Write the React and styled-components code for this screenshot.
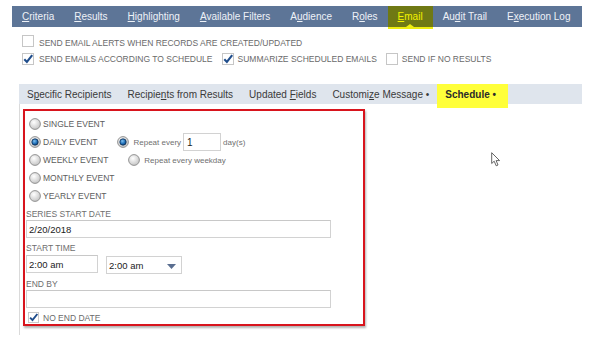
import React, { useId } from 'react';
import styled, { createGlobalStyle, css } from 'styled-components';

const GlobalStyle = createGlobalStyle`
  html, body { margin: 0; padding: 0; background: #fff; }
  body { font-family: "Liberation Sans", Arial, sans-serif; }
  * { box-sizing: border-box; }
`;

const Page = styled.div`
  position: relative;
  width: 597px;
  height: 339px;
  padding: 6px 0 0 12px;
  overflow: hidden;
`;

const NavBar = styled.nav`
  display: flex;
  width: 570px;
  height: 21px;
  background: #5d7597;
`;

const NavItem = styled.div`
  position: relative;
  display: flex;
  align-items: center;
  align-self: flex-start;
  height: 21px;
  padding: 0 10px;
  font-size: 10px;
  color: #eef2f7;
  white-space: nowrap;
  ${(p) =>
    p.$active &&
    css`
      height: 23px;
      padding-bottom: 2px;
      color: #f2f200;
      background: #6f7914;
      &::after {
        content: '';
        position: absolute;
        left: 0;
        right: 0;
        bottom: 0;
        height: 2px;
        background: #eeee10;
      }
      &::before {
        content: '';
        position: absolute;
        left: 50%;
        bottom: 2px;
        margin-left: -4px;
        border-left: 4px solid transparent;
        border-right: 4px solid transparent;
        border-bottom: 3px solid #eeee10;
      }
    `}
`;

const Key = styled.span`
  text-decoration: underline;
  text-underline-offset: 1px;
`;

const Options = styled.div`
  display: flex;
  flex-direction: column;
  padding: 8px 0 0 10px;
`;

const OptionRow = styled.div`
  display: flex;
  align-items: center;
  height: 16px;
`;

const CheckLabel = styled.label`
  display: flex;
  align-items: center;
  gap: ${(p) => (p.$gap ? p.$gap : 5)}px;
  margin-right: 9px;
  font-size: 8.5px;
  color: #6a6a6a;
  white-space: nowrap;
`;

const BoxSvg = styled.svg`
  flex: none;
  display: block;
  margin-top: ${(p) => p.$lift || 0}px;
`;

const SubTabBar = styled.div`
  display: flex;
  margin: 17px 0 0 7px;
  width: 563px;
  height: 20px;
  background: #dfe5ed;
`;

const SubTab = styled.div`
  display: flex;
  align-items: center;
  align-self: flex-start;
  height: 20px;
  padding: 0 8px;
  font-size: 10px;
  color: #3a3a3a;
  white-space: nowrap;
  ${(p) =>
    p.$active &&
    css`
      height: 24px;
      padding: 0 12px 4px 8px;
      background: #ffff3a;
      font-weight: bold;
      color: #2a2a2a;
    `}
`;

const ContentArea = styled.div`
  margin-left: 7px;
  width: 360px;
  padding: 5px 0 9px 3px;
  border-left: 1px solid #dadada;
`;

const RedBox = styled.div`
  width: 342px;
  height: 217px;
  border: 2px solid #d8141d;
  box-shadow: 1px 2px 2px rgba(0, 0, 0, 0.3);
  padding: 4px 0 0 1px;
  display: flex;
  flex-direction: column;
`;

const RadioGroup = styled.div`
  display: flex;
  flex-direction: column;
  margin-left: 3px;
`;

const RadioRow = styled.div`
  display: flex;
  align-items: center;
  gap: 20px;
  height: 18px;
`;

const RadioLabel = styled.label`
  display: flex;
  align-items: center;
  gap: ${(p) => (p.$small ? 4 : 2)}px;
  font-size: ${(p) => (p.$small ? 8 : 8.5)}px;
  color: ${(p) => (p.$small ? '#707070' : '#5c5c5c')};
  white-space: nowrap;
`;

const InlineInput = styled.div`
  width: 38px;
  height: 18px;
  margin: 0 -2px 0 -2px;
  border: 1px solid #d2d2d2;
  display: flex;
  align-items: center;
  padding-left: 3px;
  font-size: 10px;
  color: #222;
`;

const Unit = styled.span`
  font-size: 8px;
  color: #707070;
`;

const FieldLabel = styled.div`
  height: 12px;
  line-height: 12px;
  margin-top: ${(p) => p.$top}px;
  font-size: 8.5px;
  color: #6e6e6e;
  white-space: nowrap;
`;

const TextField = styled.div`
  width: ${(p) => p.$w}px;
  height: 18px;
  margin-top: ${(p) => p.$top || 0}px;
  border: 1px solid #d2d2d2;
  border-top-color: #c8c8c8;
  display: flex;
  align-items: center;
  padding-left: 2px;
  font-size: 9.5px;
  color: #222;
  background: #fff;
`;

const TimeRow = styled.div`
  display: flex;
  align-items: flex-start;
  gap: 8px;
  margin-top: 1px;
`;

const SelectBox = styled.div`
  position: relative;
  width: 76px;
  height: 18px;
  margin-top: 1px;
  border: 1px solid #d2d2d2;
  display: flex;
  align-items: center;
  padding-left: 2px;
  font-size: 9.5px;
  color: #222;
`;

const Caret = styled.svg`
  position: absolute;
  right: 5px;
  top: 7px;
`;

const EndRow = styled.div`
  display: flex;
  align-items: center;
  height: 13px;
  margin-top: 3px;
  padding-left: 2px;
`;

const Cursor = styled.svg`
  position: absolute;
  left: 491px;
  top: 152px;
`;

function Checkbox({ checked, size = 12, lift }) {
  const s = size;
  return (
    <BoxSvg width={s} height={s} viewBox="0 0 12 12" $lift={lift}>
      <rect x="0.5" y="0.5" width="11" height="11" fill="#fff" stroke="#c6c6c6" />
      {checked && (
        <path d="M2.3 6.2 L4.9 8.9 L10.2 2.2" fill="none" stroke="#1f4d8c" strokeWidth="2.1" />
      )}
    </BoxSvg>
  );
}

function Radio({ checked }) {
  const id = useId().replace(/:/g, '');
  return (
    <BoxSvg width="12" height="12" viewBox="0 0 12 12">
      <defs>
        <radialGradient id={`g${id}`} cx="40%" cy="35%" r="70%">
          <stop offset="0%" stopColor="#ffffff" />
          <stop offset="100%" stopColor="#c2c2c2" />
        </radialGradient>
        <radialGradient id={`b${id}`} cx="40%" cy="35%" r="70%">
          <stop offset="0%" stopColor="#7fc0f0" />
          <stop offset="60%" stopColor="#1f6fb8" />
          <stop offset="100%" stopColor="#0c3a6a" />
        </radialGradient>
      </defs>
      <circle cx="6" cy="6" r="5.4" fill={`url(#g${id})`} stroke="#8a8a8a" strokeWidth="0.9" />
      {checked && <circle cx="6" cy="6" r="3.2" fill={`url(#b${id})`} stroke="#0d2f55" strokeWidth="0.8" />}
    </BoxSvg>
  );
}

const navItems = [
  [<span><Key>C</Key>riteria</span>],
  [<span><Key>R</Key>esults</span>],
  [<span><Key>H</Key>ighlighting</span>],
  [<span><Key>A</Key>vailable Filters</span>],
  [<span>A<Key>u</Key>dience</span>],
  [<span>R<Key>o</Key>les</span>],
  [<span><Key>E</Key>mail</span>, true],
  [<span>Au<Key>d</Key>it Trail</span>],
  [<span>E<Key>x</Key>ecution Log</span>],
];

const subTabs = [
  [<span>S<Key>p</Key>ecific Recipients</span>],
  [<span>Recipie<Key>n</Key>ts from Results</span>],
  [<span>Updated <Key>F</Key>ields</span>],
  [<span>Customi<Key>z</Key>e Message •</span>],
  [<span>Schedule •</span>, true],
];

export default function App() {
  return (
    <>
      <GlobalStyle />
      <Page>
        <NavBar>
          {navItems.map(([label, active], i) => (
            <NavItem key={i} $active={active}>
              {label}
            </NavItem>
          ))}
        </NavBar>

        <Options>
          <OptionRow>
            <CheckLabel>
              <Checkbox lift={-4} />
              SEND EMAIL ALERTS WHEN RECORDS ARE CREATED/UPDATED
            </CheckLabel>
          </OptionRow>
          <OptionRow>
            <CheckLabel>
              <Checkbox checked />
              SEND EMAILS ACCORDING TO SCHEDULE
            </CheckLabel>
            <CheckLabel $gap={4}>
              <Checkbox checked />
              SUMMARIZE SCHEDULED EMAILS
            </CheckLabel>
            <CheckLabel $gap={4}>
              <Checkbox />
              SEND IF NO RESULTS
            </CheckLabel>
          </OptionRow>
        </Options>

        <SubTabBar>
          {subTabs.map(([label, active], i) => (
            <SubTab key={i} $active={active}>
              {label}
            </SubTab>
          ))}
        </SubTabBar>

        <ContentArea>
          <RedBox>
            <RadioGroup>
              <RadioRow>
                <RadioLabel>
                  <Radio />
                  SINGLE EVENT
                </RadioLabel>
              </RadioRow>
              <RadioRow>
                <RadioLabel>
                  <Radio checked />
                  DAILY EVENT
                </RadioLabel>
                <RadioLabel $small>
                  <Radio checked />
                  Repeat every
                  <InlineInput>1</InlineInput>
                  <Unit>day(s)</Unit>
                </RadioLabel>
              </RadioRow>
              <RadioRow>
                <RadioLabel>
                  <Radio />
                  WEEKLY EVENT
                </RadioLabel>
                <RadioLabel $small>
                  <Radio />
                  Repeat every weekday
                </RadioLabel>
              </RadioRow>
              <RadioRow>
                <RadioLabel>
                  <Radio />
                  MONTHLY EVENT
                </RadioLabel>
              </RadioRow>
              <RadioRow>
                <RadioLabel>
                  <Radio />
                  YEARLY EVENT
                </RadioLabel>
              </RadioRow>
            </RadioGroup>

            <FieldLabel $top={3}>SERIES START DATE</FieldLabel>
            <TextField $w={305}>2/20/2018</TextField>

            <FieldLabel $top={4}>START TIME</FieldLabel>
            <TimeRow>
              <TextField $w={72}>2:00 am</TextField>
              <SelectBox>
                2:00 am
                <Caret width="9" height="5" viewBox="0 0 9 5">
                  <polygon points="0,0 9,0 4.5,5" fill="#5a6e90" />
                </Caret>
              </SelectBox>
            </TimeRow>

            <FieldLabel $top={4}>END BY</FieldLabel>
            <TextField $w={305}></TextField>

            <EndRow>
              <CheckLabel $gap={4}>
                <Checkbox checked size={11} />
                NO END DATE
              </CheckLabel>
            </EndRow>
          </RedBox>
        </ContentArea>

        <Cursor width="11" height="15" viewBox="0 0 11 15">
          <path
            d="M0.7 0.7 L0.7 11.5 L3.2 9.2 L5.2 13.8 L7 13 L5.1 8.6 L8.6 8.6 Z"
            fill="#fff"
            stroke="#555"
            strokeWidth="0.9"
            strokeLinejoin="round"
          />
        </Cursor>
      </Page>
    </>
  );
}
